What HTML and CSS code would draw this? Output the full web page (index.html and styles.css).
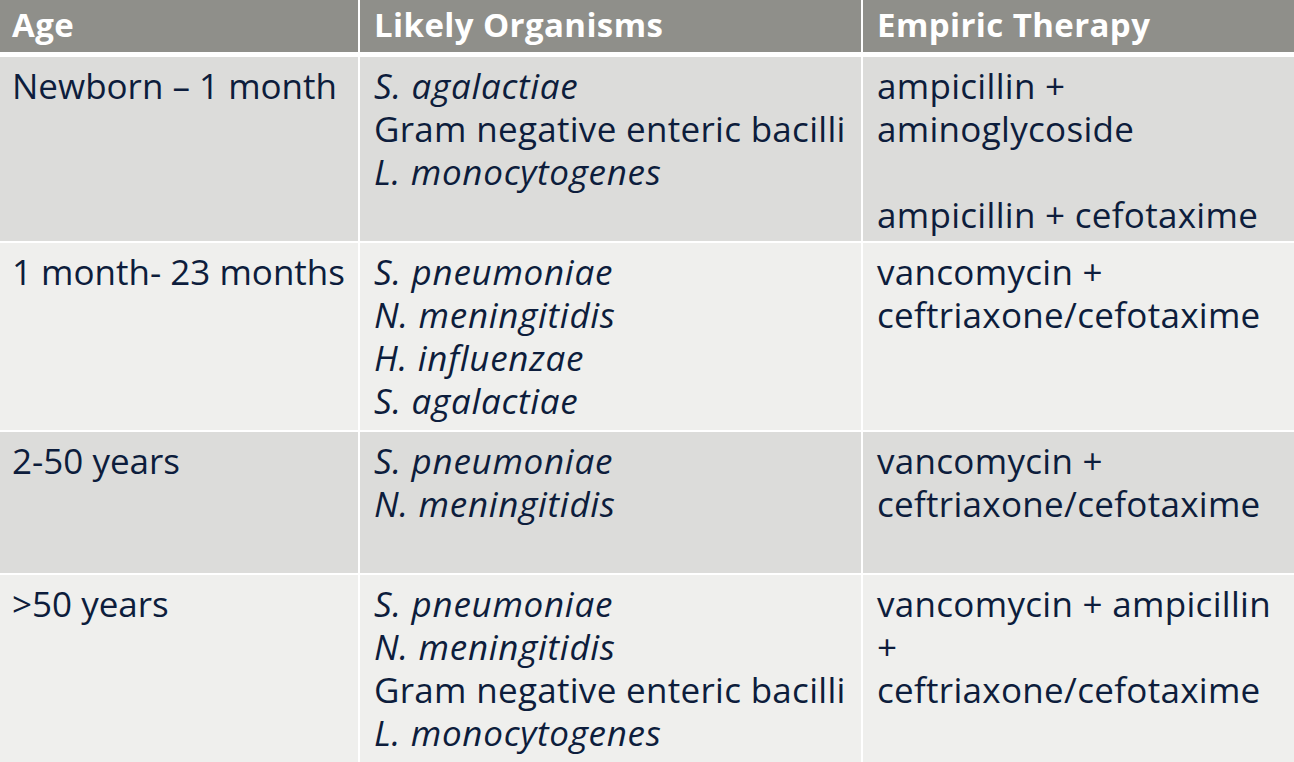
FILE: index.html
```
<!DOCTYPE html>
<html lang="en">
<head>
<meta charset="utf-8">
<title>Bacterial Meningitis Empiric Therapy</title>
<link rel="stylesheet" href="styles.css">
</head>
<body>
<div class="table">
  <div class="row head">
    <div class="cell c1">Age</div>
    <div class="cell c2">Likely Organisms</div>
    <div class="cell c3">Empiric Therapy</div>
  </div>
  <div class="row dark r1">
    <div class="cell c1">Newborn – 1 month</div>
    <div class="cell c2"><i>S. agalactiae</i><br>Gram negative enteric bacilli<br><i>L. monocytogenes</i></div>
    <div class="cell c3">ampicillin +<br>aminoglycoside<br><br>ampicillin + cefotaxime</div>
  </div>
  <div class="row light r2">
    <div class="cell c1">1 month- 23 months</div>
    <div class="cell c2"><i>S. pneumoniae</i><br><i>N. meningitidis</i><br><i>H. influenzae</i><br><i>S. agalactiae</i></div>
    <div class="cell c3">vancomycin +<br>ceftriaxone/cefotaxime</div>
  </div>
  <div class="row dark r3">
    <div class="cell c1">2-50 years</div>
    <div class="cell c2"><i>S. pneumoniae</i><br><i>N. meningitidis</i></div>
    <div class="cell c3">vancomycin +<br>ceftriaxone/cefotaxime</div>
  </div>
  <div class="row light r4">
    <div class="cell c1">&gt;50 years</div>
    <div class="cell c2"><i>S. pneumoniae</i><br><i>N. meningitidis</i><br>Gram negative enteric bacilli<br><i>L. monocytogenes</i></div>
    <div class="cell c3">vancomycin + ampicillin<br>+<br>ceftriaxone/cefotaxime</div>
  </div>
</div>
</body>
</html>
```
FILE: styles.css
```
html, body {
  margin: 0;
  padding: 0;
  background: #ffffff;
}
body {
  font-family: "Open Sans", "Noto Sans", sans-serif;
  color: #0d1d3c;
  width: 1294px;
  height: 762px;
  overflow: hidden;
}
.table {
  display: flex;
  flex-direction: column;
  gap: 2px;
  background: #ffffff;
}
.row {
  display: grid;
  grid-template-columns: 358px 501px 1fr;
  column-gap: 2px;
}
.head {
  height: 52px;
  margin-bottom: 3px;
}
.r1 { height: 184px; }
.r2 { height: 187px; }
.r3 { height: 141px; }
.r4 { height: 187px; }
.cell {
  font-size: 35px;
  line-height: 43px;
  letter-spacing: 0.3px;
  padding: 7px 10px 0 14px;
  white-space: nowrap;
  overflow: hidden;
}
.cell.c1 {
  padding-left: 12px;
  letter-spacing: 0;
}
.cell i {
  font-style: italic;
  letter-spacing: 0.7px;
}
.head .cell {
  background: #8f8f8a;
  color: #ffffff;
  font-weight: 700;
  font-size: 33px;
  letter-spacing: 0.4px;
  padding-top: 3px;
}
.dark .cell {
  background: #dcdcda;
}
.light .cell {
  background: #efefed;
}
```
